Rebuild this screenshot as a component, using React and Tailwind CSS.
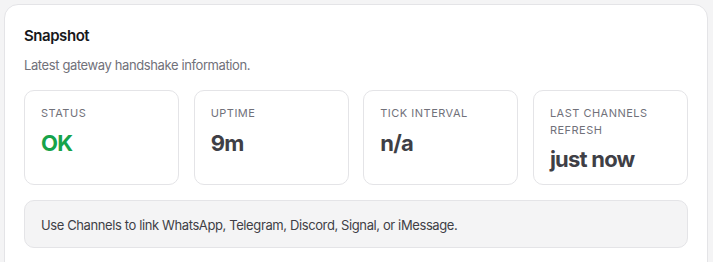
import React from "react";

const stats = [
  { label: "Status", value: "OK", green: true },
  { label: "Uptime", value: "9m" },
  { label: "Tick Interval", value: "n/a" },
  { label: "Last Channels Refresh", value: "just now" },
];

export default function App() {
  return (
    <div
      className="min-h-screen w-[713px] h-[262px] overflow-hidden bg-[#f4f4f5] pt-[4px] pl-[4px] pr-[5px]"
      style={{ fontFamily: "Inter, 'Noto Sans', sans-serif" }}
    >
      <div className="rounded-[14px] border border-[#e4e4e7] bg-white px-[19px] pt-[20px] pb-[20px] min-h-[300px]">
        <div className="text-[15px] leading-[22px] font-semibold tracking-[-0.03em] text-[#18181b]">Snapshot</div>
        <div className="mt-[8px] text-[13px] leading-[20px] tracking-[-0.03em] text-[#71717a]">
          Latest gateway handshake information.
        </div>
        <div className="mt-[15px] grid grid-cols-4 gap-[14.5px]">
          {stats.map((s) => (
            <div
              key={s.label}
              className="rounded-[10px] border border-[#e4e4e7] bg-white px-[16px] pt-[14px] pb-[13px]"
            >
              <div className="text-[11px] leading-[16.5px] uppercase tracking-[0.045em] text-[#71717a]">
                {s.label}
              </div>
              <div
                className={
                  "mt-[9px] text-[22px] leading-[24px] font-bold tracking-[-0.035em] " +
                  (s.green ? "text-[#16a34a]" : "text-[#3f3f46]")
                }
              >
                {s.value}
              </div>
            </div>
          ))}
        </div>
        <div className="mt-[15px] rounded-[10px] border border-[#e4e4e7] bg-[#f4f4f5] px-[16px] pt-[14px] pb-[12px] text-[13px] leading-[20px] tracking-[-0.03em] text-[#3f3f46]">
          Use Channels to link WhatsApp, Telegram, Discord, Signal, or iMessage.
        </div>
      </div>
    </div>
  );
}
